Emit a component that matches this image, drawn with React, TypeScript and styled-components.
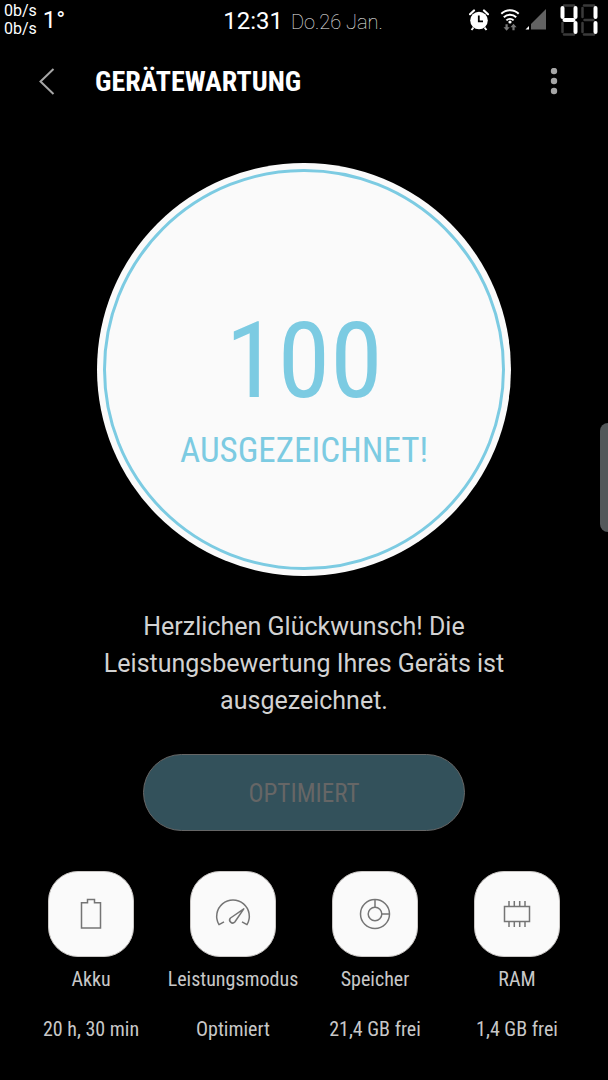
import React from 'react';
import styled, { createGlobalStyle } from 'styled-components';

const condensed = "'Roboto Condensed', 'Liberation Sans Narrow', Roboto, sans-serif";
const accent = '#7ccbe2';

const GlobalStyle = createGlobalStyle`
  * {
    box-sizing: border-box;
  }
  body {
    margin: 0;
    background: #000;
    color: #d2d2d2;
    font-family: Roboto, sans-serif;
  }
  button {
    margin: 0;
    padding: 0;
    border: 0;
    background: none;
    color: inherit;
    font: inherit;
  }
  svg {
    display: block;
  }
`;

const Screen = styled.div`
  position: relative;
  min-height: 100vh;
  background: #000;
`;

const StatusBar = styled.div`
  display: grid;
  grid-template-columns: 1fr auto 1fr;
  align-items: start;
  height: 40px;
  padding: 0 10px 0 4px;
  color: #fff;
`;

const StatusLeft = styled.div`
  display: flex;
  align-items: center;
  gap: 6px;
  height: 40px;
`;

const Speeds = styled.div`
  font-size: 16px;
  line-height: 18px;
`;

const Temperature = styled.span`
  font-size: 24px;
  line-height: 40px;
`;

const StatusClock = styled.div`
  display: flex;
  align-items: baseline;
  gap: 8px;
  padding-left: 4px;
  line-height: 42px;
`;

const Time = styled.time`
  font-size: 24px;
`;

const DateText = styled.time`
  font-size: 20px;
  font-weight: 100;
  color: #f0f0f0;
`;

const StatusRight = styled.div`
  display: flex;
  align-items: center;
  justify-content: flex-end;
  height: 40px;
`;

const Header = styled.header`
  display: flex;
  align-items: center;
  height: 84px;
  padding: 0 38px 0 31px;
`;

const IconButton = styled.button`
  display: flex;
  align-items: center;
  justify-content: center;
  width: 32px;
  height: 42px;
`;

const Title = styled.h1`
  flex: 1;
  margin: 0 0 0 32px;
  font-family: ${condensed};
  font-size: 28px;
  line-height: 42px;
  font-weight: 700;
  color: #fff;
`;

const Main = styled.main`
  display: flex;
  flex-direction: column;
  align-items: center;
  padding-top: 39px;
`;

const ScoreDisc = styled.section`
  width: 68%;
  aspect-ratio: 1;
  padding: 6px;
  border-radius: 50%;
  background: #fafafa;
`;

const ScoreRing = styled.div`
  display: flex;
  flex-direction: column;
  align-items: center;
  justify-content: center;
  height: 100%;
  padding-top: 34px;
  border: 3px solid ${accent};
  border-radius: 50%;
  color: ${accent};
  font-family: ${condensed};
`;

const Score = styled.div`
  font-size: 106px;
  line-height: 128px;
`;

const Rating = styled.div`
  font-size: 35px;
  line-height: 52px;
`;

const Message = styled.p`
  width: 70%;
  margin: 32px 0 0;
  font-size: 25px;
  line-height: 37px;
  text-align: center;
`;

const OptimizeButton = styled.button`
  width: 53%;
  height: 77px;
  margin-top: 35px;
  padding-top: 2px;
  border: 1px solid #666;
  border-radius: 39px;
  background: #33515b;
  color: #666;
  font-family: ${condensed};
  font-size: 25px;
`;

const Tiles = styled.nav`
  display: grid;
  grid-template-columns: repeat(4, 1fr);
  align-self: stretch;
  margin-top: 40px;
  padding: 0 20px;
`;

const Tile = styled.button`
  display: flex;
  flex-direction: column;
  align-items: center;
  color: #c8c8c8;
  font-family: ${condensed};
  font-size: 20px;
  line-height: 24px;
  white-space: nowrap;
`;

const TileIcon = styled.span`
  display: flex;
  align-items: center;
  justify-content: center;
  width: 86px;
  height: 86px;
  border: 1px solid #c9c6c4;
  border-radius: 30px;
  background: #fafafa;
`;

const TileName = styled.span`
  margin-top: 10px;
`;

const TileValue = styled.span`
  margin-top: 26px;
`;

const EdgeHandle = styled.div`
  position: absolute;
  top: 423px;
  right: 0;
  width: 8px;
  height: 109px;
  border-radius: 8px 0 0 8px;
  background: #53585a;
`;

const AlarmIcon = () => (
  <svg width="20" height="22" viewBox="0 0 20 22" fill="none">
    <circle cx="10" cy="11.500" r="8.800" fill="#fff" />
    <path d="M1 5.200L5 1.500M19 5.200L15 1.500" stroke="#fff" strokeWidth="2.200" strokeLinecap="round" />
    <path d="M4.500 18.500L2.500 21M15.500 18.500L17.500 21" stroke="#fff" strokeWidth="2" />
    <path d="M9.800 6.500V12.300H14" stroke="#000" strokeWidth="1.800" />
  </svg>
);

const WifiIcon = () => (
  <svg width="26" height="22" viewBox="-6 0 26 22" fill="none">
    <g stroke="#fff" strokeWidth="2">
      <path d="M1.300 4.700A12.500 12.500 0 0 1 18.700 4.700" />
      <path d="M3.800 8.200A8.900 8.900 0 0 1 16.200 8.200" />
      <path d="M6.400 11.400A5.200 5.200 0 0 1 13.600 11.400" />
    </g>
    <circle cx="10" cy="13" r="1.600" fill="#fff" />
    <path d="M5.500 15.300h2.200v3h2L6.600 21.800 3.500 18.300h2zM12.400 21.300h2.200v-3h2L13.500 14.800l-3.100 3.500h2z" fill="#777" />
  </svg>
);

const SignalIcon = () => (
  <svg width="22" height="22" viewBox="0 0 22 22">
    <path d="M21 0V20.500H6V15z" fill="#626262" />
    <path d="M4 17V20.500H.500z" fill="#fff" />
  </svg>
);

const segments: Record<string, [number, number, number, number]> = {
  a: [4, 1.5, 14, 1.5],
  b: [15.5, 4, 15.5, 13],
  c: [15.5, 19, 15.5, 28],
  d: [4, 30.5, 14, 30.5],
  e: [2.5, 19, 2.5, 28],
  f: [2.5, 4, 2.5, 13],
  g: [4.5, 16, 13.5, 16],
};

const SegmentDigit = ({ lit }: { lit: string }) => (
  <svg width="18" height="32" viewBox="0 0 18 32" strokeLinecap="round">
    {Object.entries(segments)
      .sort(([a], [b]) => Number(lit.includes(a)) - Number(lit.includes(b)))
      .map(([key, [x1, y1, x2, y2]]) => {
        const on = lit.includes(key);
        return (
          <line
            key={key}
            x1={x1}
            y1={y1}
            x2={x2}
            y2={y2}
            stroke={on ? '#fff' : '#3a3a3a'}
            strokeWidth={on ? 4 : 2.5}
          />
        );
      })}
  </svg>
);

const BatteryLevel = styled.div`
  display: flex;
  gap: 2px;
  margin-left: 13px;
`;

const StatusIcons = styled.div`
  display: flex;
  gap: 5px;
`;

const BackIcon = () => (
  <svg width="18" height="28" viewBox="0 0 18 28" fill="none">
    <path d="M15.500 1L2.500 13.500L15.500 26" stroke="#a6a6a6" strokeWidth="2" />
  </svg>
);

const MoreIcon = () => (
  <svg width="8" height="28" viewBox="0 0 8 28" fill="#a6a6a6">
    <circle cx="4" cy="3" r="3.200" />
    <circle cx="4" cy="13" r="3.200" />
    <circle cx="4" cy="23" r="3.200" />
  </svg>
);

const LineIcon = ({ children }: { children: React.ReactNode }) => (
  <svg width="36" height="36" viewBox="0 0 36 36" fill="none" stroke="#757575" strokeWidth="1.500">
    {children}
  </svg>
);

const tiles = [
  {
    name: 'Akku',
    value: '20 h, 30 min',
    icon: (
      <path d="M8.500 6.800H14.500V3.500H21.500V6.800H27.500V32H8.500Z" />
    ),
  },
  {
    name: 'Leistungsmodus',
    value: 'Optimiert',
    icon: (
      <>
        <path d="M9 25.800L4 28.600A16.300 16.300 0 1 1 32 28.600L27 25.800" strokeLinejoin="round" />
        <path d="M28.800 12.800L15.500 22A2.900 2.900 0 1 0 19.800 26Z" strokeLinejoin="round" />
      </>
    ),
  },
  {
    name: 'Speicher',
    value: '21,4 GB frei',
    icon: (
      <>
        <circle cx="18" cy="18" r="14.500" />
        <circle cx="18" cy="18" r="6.800" />
        <path d="M18 3.500V11.200M24.800 18H32.500" />
      </>
    ),
  },
  {
    name: 'RAM',
    value: '1,4 GB frei',
    icon: (
      <>
        <rect x="5.500" y="10.500" width="25" height="15" />
        <path d="M10 10.500V5M15.300 10.500V5M20.700 10.500V5M26 10.500V5M10 25.500V31M15.300 25.500V31M20.700 25.500V31M26 25.500V31" />
      </>
    ),
  },
];

export default function App() {
  return (
    <Screen>
      <GlobalStyle />
      <StatusBar>
        <StatusLeft>
          <Speeds>
            <div>0b/s</div>
            <div>0b/s</div>
          </Speeds>
          <Temperature>1°</Temperature>
        </StatusLeft>
        <StatusClock>
          <Time>12:31</Time>
          <DateText>Do.26 Jan.</DateText>
        </StatusClock>
        <StatusRight>
          <StatusIcons>
            <AlarmIcon />
            <WifiIcon />
            <SignalIcon />
          </StatusIcons>
          <BatteryLevel role="img" aria-label="41">
            <SegmentDigit lit="bcfg" />
            <SegmentDigit lit="bc" />
          </BatteryLevel>
        </StatusRight>
      </StatusBar>
      <Header>
        <IconButton type="button" aria-label="Zurück">
          <BackIcon />
        </IconButton>
        <Title>GERÄTEWARTUNG</Title>
        <IconButton type="button" aria-label="Weitere Optionen">
          <MoreIcon />
        </IconButton>
      </Header>
      <Main>
        <ScoreDisc>
          <ScoreRing>
            <Score>100</Score>
            <Rating>AUSGEZEICHNET!</Rating>
          </ScoreRing>
        </ScoreDisc>
        <Message>Herzlichen Glückwunsch! Die Leistungsbewertung Ihres Geräts ist ausgezeichnet.</Message>
        <OptimizeButton type="button" disabled>
          OPTIMIERT
        </OptimizeButton>
        <Tiles>
          {tiles.map((tile) => (
            <Tile type="button" key={tile.name}>
              <TileIcon>
                <LineIcon>{tile.icon}</LineIcon>
              </TileIcon>
              <TileName>{tile.name}</TileName>
              <TileValue>{tile.value}</TileValue>
            </Tile>
          ))}
        </Tiles>
      </Main>
      <EdgeHandle />
    </Screen>
  );
}
